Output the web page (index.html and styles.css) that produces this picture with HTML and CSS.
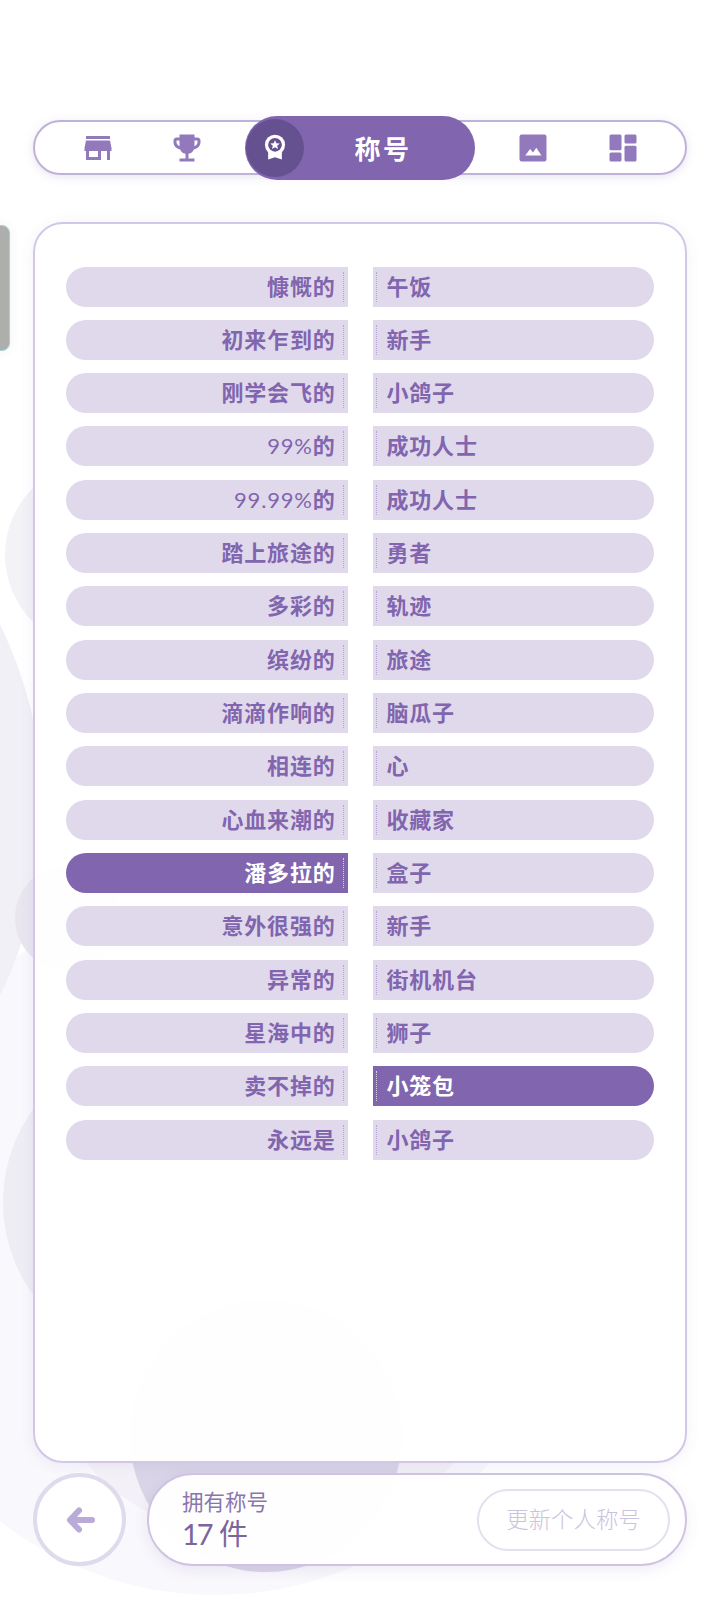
FILE: index.html
```html
<!DOCTYPE html>
<html lang="zh-CN">
<head>
  <meta charset="UTF-8">
  <meta name="viewport" content="width=device-width, initial-scale=1.0">
  <title>称号</title>
  <link rel="stylesheet" href="styles.css">
</head>
<body>
  <div class="blobs">
    <div class="blob blob-wide"></div>
    <div class="blob blob-bottom"></div>
    <div class="blob blob-upper"></div>
    <div class="blob blob-edge"></div>
    <div class="blob blob-small"></div>
    <div class="blob blob-lower"></div>
    <div class="blob blob-center"></div>
  </div>
  <div class="side-tab"></div>

  <div class="page">
    <nav class="nav">
      <div class="nav-item">
        <svg class="nav-icon" viewBox="0 0 24 24"><path d="M20 4H4v2h16V4zm1 10v-2l-1-5H4l-1 5v2h1v6h10v-6h4v6h2v-6h1zm-9 4H6v-4h6v4z"/></svg>
      </div>
      <div class="nav-item">
        <svg class="nav-icon" viewBox="0 0 24 24"><path d="M19 5h-2V3H7v2H5c-1.1 0-2 .9-2 2v1c0 2.55 1.92 4.63 4.39 4.94.63 1.5 1.98 2.63 3.61 2.96V19H7v2h10v-2h-4v-3.1c1.63-.33 2.98-1.46 3.61-2.96C19.08 12.63 21 10.55 21 8V7c0-1.1-.9-2-2-2zM5 8V7h2v3.82C5.84 10.4 5 9.3 5 8zm14 0c0 1.3-.84 2.4-2 2.82V7h2v1z"/></svg>
      </div>
      <div class="nav-active">
        <div class="medal">
          <svg class="medal-icon" viewBox="0 0 24 28">
            <path class="medal-white" d="M4.5 14h15v13L12 24.5 4.5 27z"/>
            <circle class="medal-white" cx="12" cy="11" r="11"/>
            <circle class="medal-dark" cx="12" cy="11" r="7.5"/>
            <path class="medal-white" d="M12 6l1.5 3.4 3.7.3-2.8 2.4.9 3.6L12 13.8l-3.3 1.9.9-3.6-2.8-2.4 3.7-.3z"/>
          </svg>
        </div>
        <span class="nav-title">称号</span>
      </div>
      <div class="nav-item">
        <svg class="nav-icon" viewBox="0 0 24 24"><path fill-rule="evenodd" d="M4.5 3h15A1.500 1.500 0 0 1 21 4.500v15a1.500 1.500 0 0 1-1.500 1.500h-15A1.500 1.500 0 0 1 3 19.500v-15A1.500 1.500 0 0 1 4.500 3zM6.800 17h10.800l-3.400-5.200-2.200 3.200-1.900-2.400z"/></svg>
      </div>
      <div class="nav-item">
        <svg class="nav-icon" viewBox="0 0 24 24">
          <rect x="3" y="3" width="8" height="10.500" rx="1"/>
          <rect x="3" y="15" width="8" height="6" rx="1"/>
          <rect x="13" y="3" width="8" height="6" rx="1"/>
          <rect x="13" y="10.500" width="8" height="10.500" rx="1"/>
        </svg>
      </div>
    </nav>

    <main class="panel">
      <div class="titles">
        <div class="pill pill-left"><span class="pill-text">慷慨的</span></div>
        <div class="pill pill-right"><span class="pill-text">午饭</span></div>
        <div class="pill pill-left"><span class="pill-text">初来乍到的</span></div>
        <div class="pill pill-right"><span class="pill-text">新手</span></div>
        <div class="pill pill-left"><span class="pill-text">刚学会飞的</span></div>
        <div class="pill pill-right"><span class="pill-text">小鸽子</span></div>
        <div class="pill pill-left"><span class="pill-text"><span class="num">99%</span>的</span></div>
        <div class="pill pill-right"><span class="pill-text">成功人士</span></div>
        <div class="pill pill-left"><span class="pill-text"><span class="num">99.99%</span>的</span></div>
        <div class="pill pill-right"><span class="pill-text">成功人士</span></div>
        <div class="pill pill-left"><span class="pill-text">踏上旅途的</span></div>
        <div class="pill pill-right"><span class="pill-text">勇者</span></div>
        <div class="pill pill-left"><span class="pill-text">多彩的</span></div>
        <div class="pill pill-right"><span class="pill-text">轨迹</span></div>
        <div class="pill pill-left"><span class="pill-text">缤纷的</span></div>
        <div class="pill pill-right"><span class="pill-text">旅途</span></div>
        <div class="pill pill-left"><span class="pill-text">滴滴作响的</span></div>
        <div class="pill pill-right"><span class="pill-text">脑瓜子</span></div>
        <div class="pill pill-left"><span class="pill-text">相连的</span></div>
        <div class="pill pill-right"><span class="pill-text">心</span></div>
        <div class="pill pill-left"><span class="pill-text">心血来潮的</span></div>
        <div class="pill pill-right"><span class="pill-text">收藏家</span></div>
        <div class="pill pill-left selected"><span class="pill-text">潘多拉的</span></div>
        <div class="pill pill-right"><span class="pill-text">盒子</span></div>
        <div class="pill pill-left"><span class="pill-text">意外很强的</span></div>
        <div class="pill pill-right"><span class="pill-text">新手</span></div>
        <div class="pill pill-left"><span class="pill-text">异常的</span></div>
        <div class="pill pill-right"><span class="pill-text">街机机台</span></div>
        <div class="pill pill-left"><span class="pill-text">星海中的</span></div>
        <div class="pill pill-right"><span class="pill-text">狮子</span></div>
        <div class="pill pill-left"><span class="pill-text">卖不掉的</span></div>
        <div class="pill pill-right selected"><span class="pill-text">小笼包</span></div>
        <div class="pill pill-left"><span class="pill-text">永远是</span></div>
        <div class="pill pill-right"><span class="pill-text">小鸽子</span></div>
      </div>
    </main>

    <footer class="footer">
      <button class="back">
        <svg class="back-icon" viewBox="0 0 30 30"><path d="M27 15H6M14 5.500L5 15l9 9.500"/></svg>
      </button>
      <div class="summary">
        <div class="count">
          <div class="count-label">拥有称号</div>
          <div class="count-value"><span class="count-num">17</span> 件</div>
        </div>
        <button class="update">更新个人称号</button>
      </div>
    </footer>
  </div>
</body>
</html>
```

FILE: styles.css
```css
* {
  box-sizing: border-box;
}
html, body {
  margin: 0;
  padding: 0;
}
body {
  position: relative;
  width: 720px;
  height: 1600px;
  overflow: hidden;
  background-color: #fff;
  font-family: "Lato", "Noto Sans CJK SC", sans-serif;
  color: #8165ae;
}

/* background shapes */
.blobs {
  position: absolute;
  inset: 0;
}
.blob {
  position: absolute;
  border-radius: 50%;
}
.blob-wide {
  left: -135px;
  top: 895px;
  width: 700px;
  height: 700px;
  background-color: #f9f8fc;
}
.blob-bottom {
  left: 60px;
  top: 1240px;
  width: 420px;
  height: 300px;
  background-color: #f3f1f7;
}
.blob-upper {
  left: 5px;
  top: 461px;
  width: 188px;
  height: 188px;
  background-color: #f3f2f7;
}
.blob-edge {
  left: -801px;
  top: 388px;
  width: 844px;
  height: 844px;
  background-color: #f1f0f6;
}
.blob-small {
  left: 15px;
  top: 865px;
  width: 106px;
  height: 106px;
  background-color: #e9e6f0;
}
.blob-lower {
  left: 3px;
  top: 1043px;
  width: 318px;
  height: 318px;
  background-color: #efedf4;
}
.blob-center {
  left: 130px;
  top: 1300px;
  width: 272px;
  height: 272px;
  background-color: #d9d4e7;
}
.side-tab {
  position: absolute;
  left: -8px;
  top: 225px;
  width: 18px;
  height: 126px;
  background-color: #adafad;
  border: 1px solid #a8d2d2;
  border-radius: 8px;
  box-shadow: 0 0 10px rgba(120, 100, 160, 0.1);
}

.page {
  position: relative;
  display: flex;
  flex-direction: column;
  height: 1600px;
  padding: 120px 33px 34px 33px;
}

/* top nav */
.nav {
  display: flex;
  align-items: center;
  height: 55px;
  flex: none;
  padding: 0 18px;
  background-color: #fff;
  border: 2px solid #bfb2d9;
  border-radius: 28px;
  box-shadow: 0 2px 10px rgba(129, 101, 174, 0.18);
}
.nav-item {
  display: flex;
  justify-content: center;
  width: 90px;
}
.nav-item:last-child {
  margin-left: 1px;
}
.nav-icon {
  width: 36px;
  height: 36px;
  fill: #9179bb;
}
.nav-active {
  display: flex;
  align-items: center;
  flex: none;
  width: 230px;
  height: 64px;
  margin: 0 13px 0 14px;
  padding: 3px 1px;
  background-color: #8165ae;
  border-radius: 32px;
}
.medal {
  display: flex;
  align-items: center;
  justify-content: center;
  flex: none;
  width: 58px;
  height: 58px;
  background-color: #65518f;
  border-radius: 50%;
}
.medal-icon {
  width: 22px;
  height: 27px;
}
.medal-white {
  fill: #fff;
}
.medal-dark {
  fill: #65518f;
}
.nav-title {
  flex: 1;
  padding-right: 12px;
  text-align: center;
  font-size: 26px;
  font-weight: 700;
  letter-spacing: 2.5px;
  color: #fff;
}

/* title list */
.panel {
  flex: 1;
  margin-top: 47px;
  padding: 42.5px 31px;
  background-color: rgba(255, 255, 255, 0.96);
  border: 2px solid #d2c7e6;
  border-radius: 30px;
  box-shadow: 0 2px 14px rgba(129, 101, 174, 0.1);
}
.titles {
  display: grid;
  grid-template-columns: 1fr 1fr;
  gap: 13.33px 25px;
}
.pill {
  display: flex;
  align-items: stretch;
  height: 40px;
  padding: 5px 3px;
  background-color: #e0d9ec;
  font-size: 22px;
  font-weight: 700;
  letter-spacing: 0.8px;
  line-height: 30px;
  color: #8165ae;
}
.pill-left {
  justify-content: flex-end;
  padding-right: 4px;
  border-radius: 20px 0 0 20px;
}
.pill-right {
  justify-content: flex-start;
  border-radius: 0 20px 20px 0;
}
.pill-text {
  border: 0 dotted #b5a5d2;
}
.pill-left .pill-text {
  padding-right: 7px;
  border-right-width: 1px;
}
.pill-right .pill-text {
  padding-left: 10px;
  border-left-width: 1px;
}
.num {
  font-weight: 400;
}
.selected {
  background-color: #8165ae;
  color: #fff;
}
.selected .pill-text {
  border-color: #d8cfe9;
}

/* footer */
.footer {
  display: flex;
  flex: none;
  gap: 21px;
  height: 93px;
  margin-top: 10px;
}
.back {
  display: flex;
  align-items: center;
  justify-content: center;
  flex: none;
  width: 93px;
  height: 93px;
  padding: 0;
  background-color: rgba(255, 255, 255, 0.9);
  border: 4px solid #e0dbec;
  border-radius: 50%;
}
.back-icon {
  width: 30px;
  height: 30px;
  fill: none;
  stroke: #b9aad8;
  stroke-width: 6;
  stroke-linecap: round;
  stroke-linejoin: round;
}
.summary {
  display: flex;
  flex: 1;
  align-items: center;
  justify-content: space-between;
  padding: 0 15px 0 33px;
  background-color: rgba(255, 255, 255, 0.96);
  border: 2px solid #cfc3e4;
  border-radius: 46px;
  box-shadow: 0 4px 14px rgba(129, 101, 174, 0.12);
}
.count-label {
  font-size: 21.5px;
  line-height: 29px;
  font-weight: 400;
  color: #8a76ad;
}
.count-value {
  font-size: 29px;
  line-height: 34px;
  font-weight: 400;
  color: #7a659f;
}
.count-num {
  font-weight: 400;
  letter-spacing: -2px;
}
.update {
  width: 193px;
  height: 62px;
  padding: 0 0 3px;
  background-color: transparent;
  border: 2px solid #e5e0ef;
  border-radius: 31px;
  font-family: inherit;
  font-size: 22.4px;
  font-weight: 300;
  color: #cbc2dd;
}
```
